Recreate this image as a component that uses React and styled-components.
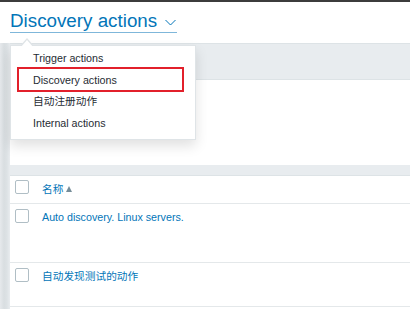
import React from 'react';
import styled, { createGlobalStyle } from 'styled-components';

const GlobalStyle = createGlobalStyle`
    body {
        margin: 0;
        font-family: "Liberation Sans", Arial, "Noto Sans CJK SC", sans-serif;
    }
`;

const Page = styled.div`
    position: relative;
    width: 410px;
    height: 309px;
    overflow: hidden;
    background: #ebeef0;
    border-top: 2px solid #3c3c3c;
    box-sizing: border-box;
`;

const Header = styled.div`
    background: #fff;
    height: 41px;
    padding: 8px 0 0 10px;
    box-sizing: border-box;
`;

const Title = styled.div`
    display: inline-flex;
    align-items: center;
    height: 22px;
    line-height: 22px;
    font-size: 18.8px;
    color: #0275b8;
    border-bottom: 1px solid #7fb7da;
    padding-right: 1px;
`;

const Chevron = styled.svg`
    margin-left: 8px;
    margin-top: 2px;
`;

const Main = styled.div`
    display: flex;
    height: 266px;
`;

const Gutter = styled.div`
    width: 10px;
    flex-shrink: 0;
    background: linear-gradient(to right, #e6e9ec 0px, #d9dee1 4px, #dde2e5 7px, #e9ecef 10px);
`;

const Content = styled.div`
    flex: 1;
    display: flex;
    flex-direction: column;
`;

const FilterTabs = styled.div`
    height: 37px;
    background: #e8ecef;
    border-top: 1px solid #dde3e6;
    border-bottom: 1px solid #dde3e6;
    box-sizing: border-box;
`;

const FilterBody = styled.div`
    height: 85px;
    background: #fff;
`;

const Gap = styled.div`
    height: 10px;
    background: #e8ecef;
    border-bottom: 1px solid #dde3e6;
`;

const Table = styled.div`
    flex: 1;
    background: #fff;
`;

const Row = styled.div`
    display: grid;
    grid-template-columns: 32px 1fr;
    height: ${(p) => p.height}px;
    border-bottom: 1px solid #e4e8ea;
    box-sizing: border-box;
    padding-top: ${(p) => (p.head ? 4 : 5)}px;
`;

const Check = styled.span`
    display: block;
    width: 14px;
    height: 14px;
    margin-left: 5px;
    border: 1px solid #b0bec5;
    border-radius: 2px;
    box-sizing: border-box;
    background: #fff;
`;

const Cell = styled.div`
    font-size: 10.7px;
    line-height: 14px;
    color: #0275b8;
    padding-top: ${(p) => (p.head ? 2 : 1)}px;
`;

const SortArrow = styled.span`
    display: inline-block;
    margin-left: 3px;
    width: 0;
    height: 0;
    border-left: 3.5px solid transparent;
    border-right: 3.5px solid transparent;
    border-bottom: 6px solid #768d99;
    vertical-align: 1px;
`;

const Menu = styled.div`
    position: absolute;
    left: 10px;
    top: 43px;
    width: 186px;
    height: 95px;
    background: #fff;
    border: 1px solid #dfe4e7;
    box-sizing: border-box;
    padding-top: 2px;
    box-shadow: 0 6px 12px rgba(0, 0, 0, 0.12);
    &::before,
    &::after {
        content: '';
        position: absolute;
        width: 0;
        height: 0;
        border-left: 7px solid transparent;
        border-right: 7px solid transparent;
    }
    &::before {
        left: 9px;
        top: -8px;
        border-bottom: 8px solid #dfe4e7;
    }
    &::after {
        left: 10px;
        top: -6px;
        border-left-width: 6px;
        border-right-width: 6px;
        border-bottom: 7px solid #fff;
    }
`;

const MenuItem = styled.div`
    height: 21.7px;
    line-height: 21.7px;
    padding-left: 22px;
    font-size: 10.7px;
    color: #1f2c33;
`;

const Highlight = styled.div`
    position: absolute;
    left: 6px;
    top: 21px;
    width: 167px;
    height: 25px;
    border: 2px solid #e2202b;
    box-sizing: border-box;
`;

const menuItems = ['Trigger actions', 'Discovery actions', '自动注册动作', 'Internal actions'];

const rows = [
    { text: 'Auto discovery. Linux servers.', height: 59 },
    { text: '自动发现测试的动作', height: 44 },
];

const App = () => {
    return (
        <Page>
            <GlobalStyle />
            <Header>
                <Title>
                    Discovery actions
                    <Chevron width="11" height="7" viewBox="0 0 11 7">
                        <path d="M0.5 1 L5.5 6 L10.5 1" fill="none" stroke="#0275b8" strokeWidth="1" />
                    </Chevron>
                </Title>
            </Header>
            <Main>
                <Gutter />
                <Content>
                    <FilterTabs />
                    <FilterBody />
                    <Gap />
                    <Table>
                        <Row head height={28}>
                            <Check />
                            <Cell head>名称<SortArrow /></Cell>
                        </Row>
                        {rows.map((r) => (
                            <Row key={r.text} height={r.height}>
                                <Check />
                                <Cell>{r.text}</Cell>
                            </Row>
                        ))}
                    </Table>
                </Content>
            </Main>
            <Menu>
                {menuItems.map((m) => (
                    <MenuItem key={m}>{m}</MenuItem>
                ))}
                <Highlight />
            </Menu>
        </Page>
    );
};

export default App;
